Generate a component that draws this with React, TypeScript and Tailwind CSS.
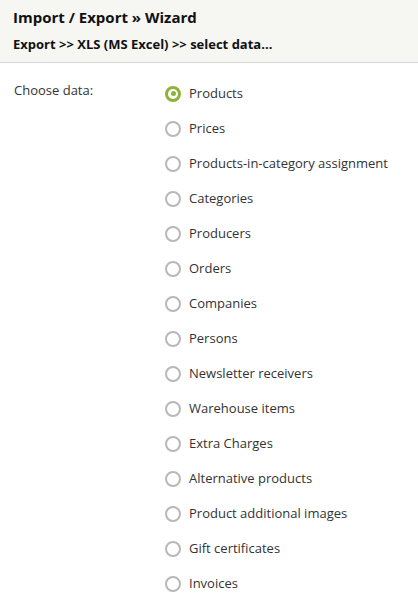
import { useState } from "react";

const OPTIONS = [
    "Products",
    "Prices",
    "Products-in-category assignment",
    "Categories",
    "Producers",
    "Orders",
    "Companies",
    "Persons",
    "Newsletter receivers",
    "Warehouse items",
    "Extra Charges",
    "Alternative products",
    "Product additional images",
    "Gift certificates",
    "Invoices",
];

export default function App() {
    const [selected, setSelected] = useState("Products");

    return (
        <div className="w-[418px] h-[604px] bg-white overflow-hidden text-[#222]" style={{ fontFamily: '"Open Sans", sans-serif' }}>
            {/* Header */}
            <div className="bg-[#f6f6f2] border-b border-[#d6d6d6] px-[13px] pt-[6px] h-[63px]">
                <h1 className="text-[15px] font-bold leading-[22px] text-[#111]">Import / Export » Wizard</h1>
                <p className="text-[13px] font-bold leading-[18px] mt-[7px] text-[#111]">Export &gt;&gt; XLS (MS Excel) &gt;&gt; select data...</p>
            </div>

            {/* Form */}
            <div className="flex pt-[13px]">
                <div className="w-[165px] pl-[14px] text-[13px] leading-[28px] text-[#333]">Choose data:</div>
                <div className="flex flex-col">
                    {OPTIONS.map((opt) => {
                        const active = opt === selected;
                        return (
                            <label
                                key={opt}
                                onClick={() => setSelected(opt)}
                                className="flex items-center gap-[8px] h-[35px] cursor-pointer"
                            >
                                <span
                                    className={
                                        active
                                            ? "w-[16px] h-[16px] rounded-full border-[3px] border-[#8db33a] flex items-center justify-center"
                                            : "w-[16px] h-[16px] rounded-full border-[2px] border-[#b8b8b8]"
                                    }
                                >
                                    {active && <span className="w-[5px] h-[5px] rounded-full bg-[#8db33a]" />}
                                </span>
                                <span className="text-[13px] text-[#333]">{opt}</span>
                            </label>
                        );
                    })}
                </div>
            </div>
        </div>
    );
}
